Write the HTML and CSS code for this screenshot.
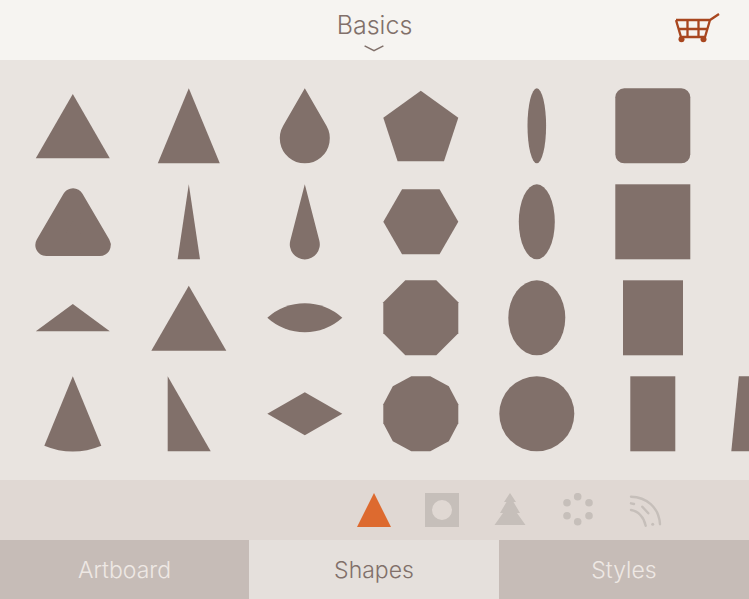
FILE: index.html
```html
<!DOCTYPE html>
<html lang="en">
  <head>
    <meta charset="UTF-8" />
    <title>Shapes</title>
    <link rel="stylesheet" href="styles.css">
  </head>
  <body>
    <header class="top-bar">
      <div class="picker">
        <h1 class="picker-title">Basics</h1>
        <svg class="picker-chevron" viewBox="0 0 20 7"><path d="M.6.8 10 5.6 19.4.8"/></svg>
      </div>
      <svg class="cart" viewBox="0 0 45 30">
        <path class="cart-line" d="M1 7H35L44 1M1 7 6 24H30L35 7M3.500 16H32.500M12.500 7V24M23.500 7V24"/>
        <circle cx="6.500" cy="26.300" r="3"/><circle cx="28.500" cy="26.300" r="3"/>
      </svg>
    </header>

    <main class="shapes">
      <div class="shape-row">
        <svg class="shape" viewBox="-.3 -.3 75 75"><polygon points="37.500,5.700 74.500,70 .5,70"/></svg>
        <svg class="shape" viewBox="-.3 -.3 75 75"><polygon points="37.500,0 68.500,75 6.500,75"/></svg>
        <svg class="shape" viewBox="-.3 -.3 75 75"><path d="M37.500 0 59.150 37.500A25 25 0 1 1 15.850 37.500Z"/></svg>
        <svg class="shape" viewBox="-.3 -.3 75 75"><polygon points="37.500,2.400 75,29.400 60.700,73 14.300,73 0,29.400"/></svg>
        <svg class="shape" viewBox="-.3 -.3 75 75"><ellipse cx="37.500" cy="37.500" rx="9.300" ry="37.500"/></svg>
        <svg class="shape" viewBox="-.3 -.3 75 75"><rect width="75" height="75" rx="9"/></svg>
      </div>
      <div class="shape-row">
        <svg class="shape" viewBox="-.3 -.3 75 75"><polygon class="rounded" points="37.700,15 64.500,60.700 11,60.700"/></svg>
        <svg class="shape" viewBox="-.3 -.3 75 75"><polygon points="37.500,0 48.700,75 26.300,75"/></svg>
        <svg class="shape" viewBox="-.3 -.3 75 75"><path d="M37.500 0 52 56.250A15 15 0 1 1 23 56.250Z"/></svg>
        <svg class="shape" viewBox="-.3 -.3 75 75"><polygon points="18.750,5 56.250,5 75,37.500 56.250,70 18.750,70 0,37.500"/></svg>
        <svg class="shape" viewBox="-.3 -.3 75 75"><ellipse cx="37.500" cy="37.500" rx="18" ry="37.500"/></svg>
        <svg class="shape" viewBox="-.3 -.3 75 75"><rect width="75" height="75"/></svg>
      </div>
      <div class="shape-row">
        <svg class="shape" viewBox="-.3 -.3 75 75"><polygon points="37.500,23.700 74.500,51 .5,51"/></svg>
        <svg class="shape" viewBox="-.3 -.3 75 75"><polygon points="37.500,5.400 75,70.400 0,70.400"/></svg>
        <svg class="shape" viewBox="-.3 -.3 75 75"><path d="M0 37.500A55.700 55.700 0 0 1 75 37.500 55.700 55.700 0 0 1 0 37.500Z"/></svg>
        <svg class="shape" viewBox="-.3 -.3 75 75"><polygon points="22,0 53,0 75,22 75,53 53,75 22,75 0,53 0,22"/></svg>
        <svg class="shape" viewBox="-.3 -.3 75 75"><ellipse cx="37.500" cy="37.500" rx="28.500" ry="37.500"/></svg>
        <svg class="shape" viewBox="-.3 -.3 75 75"><rect x="7.700" width="60" height="75"/></svg>
      </div>
      <div class="shape-row">
        <svg class="shape" viewBox="-.3 -.3 75 75"><path d="M37.500 0 66 69.400A75 75 0 0 1 9 69.400Z"/></svg>
        <svg class="shape" viewBox="-.3 -.3 75 75"><polygon points="16.400,0 59.400,75 16.400,75"/></svg>
        <svg class="shape" viewBox="-.3 -.3 75 75"><polygon points="0,37.500 37.500,16 75,37.500 37.500,59"/></svg>
        <svg class="shape" viewBox="-.3 -.3 75 75"><polygon points="28,0 47,0 65.500,10 75,28 75,47 65.500,65 47,75 28,75 9.500,65 0,47 0,28 9.500,10"/></svg>
        <svg class="shape" viewBox="-.3 -.3 75 75"><circle cx="37.500" cy="37.500" r="37.500"/></svg>
        <svg class="shape" viewBox="-.3 -.3 75 75"><rect x="15" width="45" height="75"/></svg>
        <svg class="shape" viewBox="-.3 -.3 75 75"><polygon points="7.500,0 67.500,0 75,75 0,75"/></svg>
      </div>
    </main>

    <div class="categories">
      <svg class="category" viewBox="0 0 34 34"><polygon class="category-active" points="17,0 34,34 0,34"/></svg>
      <svg class="category" viewBox="0 0 34 34"><path fill-rule="evenodd" d="M0 0H34V34H0ZM17 7A10 10 0 1 0 17 27 10 10 0 1 0 17 7Z"/></svg>
      <svg class="category" viewBox="0 0 34 34"><polygon points="17,0 23,9 20.500,9 27,20 24,20 32.500,32 1.500,32 10,20 7,20 13.500,9 11,9"/></svg>
      <svg class="category" viewBox="0 0 34 34"><circle cx="16.700" cy="3.700" r="3.800"/><circle cx="28" cy="9.700" r="3.800"/><circle cx="28" cy="22.700" r="3.800"/><circle cx="16.700" cy="28.700" r="3.800"/><circle cx="6" cy="22.700" r="3.800"/><circle cx="6" cy="9.700" r="3.800"/></svg>
      <svg class="category" viewBox="0 0 34 34"><path class="category-line" d="M2 3.700C17 4 30 14 31 31.300M2 17C9 18 15 24 16.700 32.700M2 10.300 5 11M13.300 13.700 19.300 20.300"/><circle cx="23.700" cy="31.300" r="1.500"/></svg>
    </div>

    <nav class="tabs">
      <div class="tab">Artboard</div>
      <div class="tab tab-active">Shapes</div>
      <div class="tab">Styles</div>
    </nav>
  </body>
</html>
```

FILE: styles.css
```css
:root {
  --shape-color: #81706a;
  --bg-color: #e9e4e0;
  --header-bg: #f6f4f1;
  --tray-bg: #e0d8d3;
  --tab-bg: #c6bcb7;
  --tab-active-bg: #e5e0dc;
  --muted-icon: #c6bfba;
  --accent-color: #dd6a2f;
  --cart-color: #a8461f;
}

* {
  box-sizing: border-box;
}

html,
body {
  height: 100%;
}

body {
  margin: 0;
  overflow: hidden;
  display: flex;
  flex-direction: column;
  font-family: "Inter", "Lato", sans-serif;
  font-weight: 300;
  background-color: var(--bg-color);
}

.top-bar {
  height: 60px;
  flex: none;
  position: relative;
  display: flex;
  justify-content: center;
  background-color: var(--header-bg);
}

.picker {
  display: flex;
  flex-direction: column;
  align-items: center;
  padding-top: 9px;
}

.picker-title {
  margin: 0;
  font-size: 25px;
  font-weight: 300;
  line-height: 32px;
  color: var(--shape-color);
}

.picker-chevron {
  width: 20px;
  height: 7px;
  margin: 4px 1px 0 0;
  fill: none;
  stroke: var(--shape-color);
  stroke-width: 1.5;
}

.cart {
  position: absolute;
  top: 13px;
  left: 675px;
  width: 45px;
  height: 30px;
  fill: var(--cart-color);
}

.cart-line {
  fill: none;
  stroke: var(--cart-color);
  stroke-width: 2.300;
}

.shapes {
  flex: 1;
  padding: 28px 0 0 35px;
  display: flex;
  flex-direction: column;
  gap: 21px;
  overflow: hidden;
}

.shape-row {
  display: flex;
  gap: 41px;
}

.shape {
  width: 75px;
  height: 75px;
  flex: none;
  overflow: visible;
  fill: var(--shape-color);
}

.rounded {
  stroke: var(--shape-color);
  stroke-width: 22;
  stroke-linejoin: round;
}

.categories {
  height: 60px;
  flex: none;
  display: flex;
  align-items: center;
  gap: 34px;
  padding: 0 0 0 357px;
  background-color: var(--tray-bg);
  fill: var(--muted-icon);
}

.category {
  width: 34px;
  height: 34px;
  flex: none;
}

.category-active {
  fill: var(--accent-color);
}

.category-line {
  fill: none;
  stroke: var(--muted-icon);
  stroke-width: 2.400;
  stroke-linecap: round;
}

.tabs {
  height: 59px;
  flex: none;
  display: grid;
  grid-template-columns: 249px 250px 250px;
}

.tab {
  display: flex;
  align-items: center;
  justify-content: center;
  font-size: 23px;
  color: #eee8e4;
  background-color: var(--tab-bg);
}

.tab-active {
  color: var(--shape-color);
  background-color: var(--tab-active-bg);
}
```
